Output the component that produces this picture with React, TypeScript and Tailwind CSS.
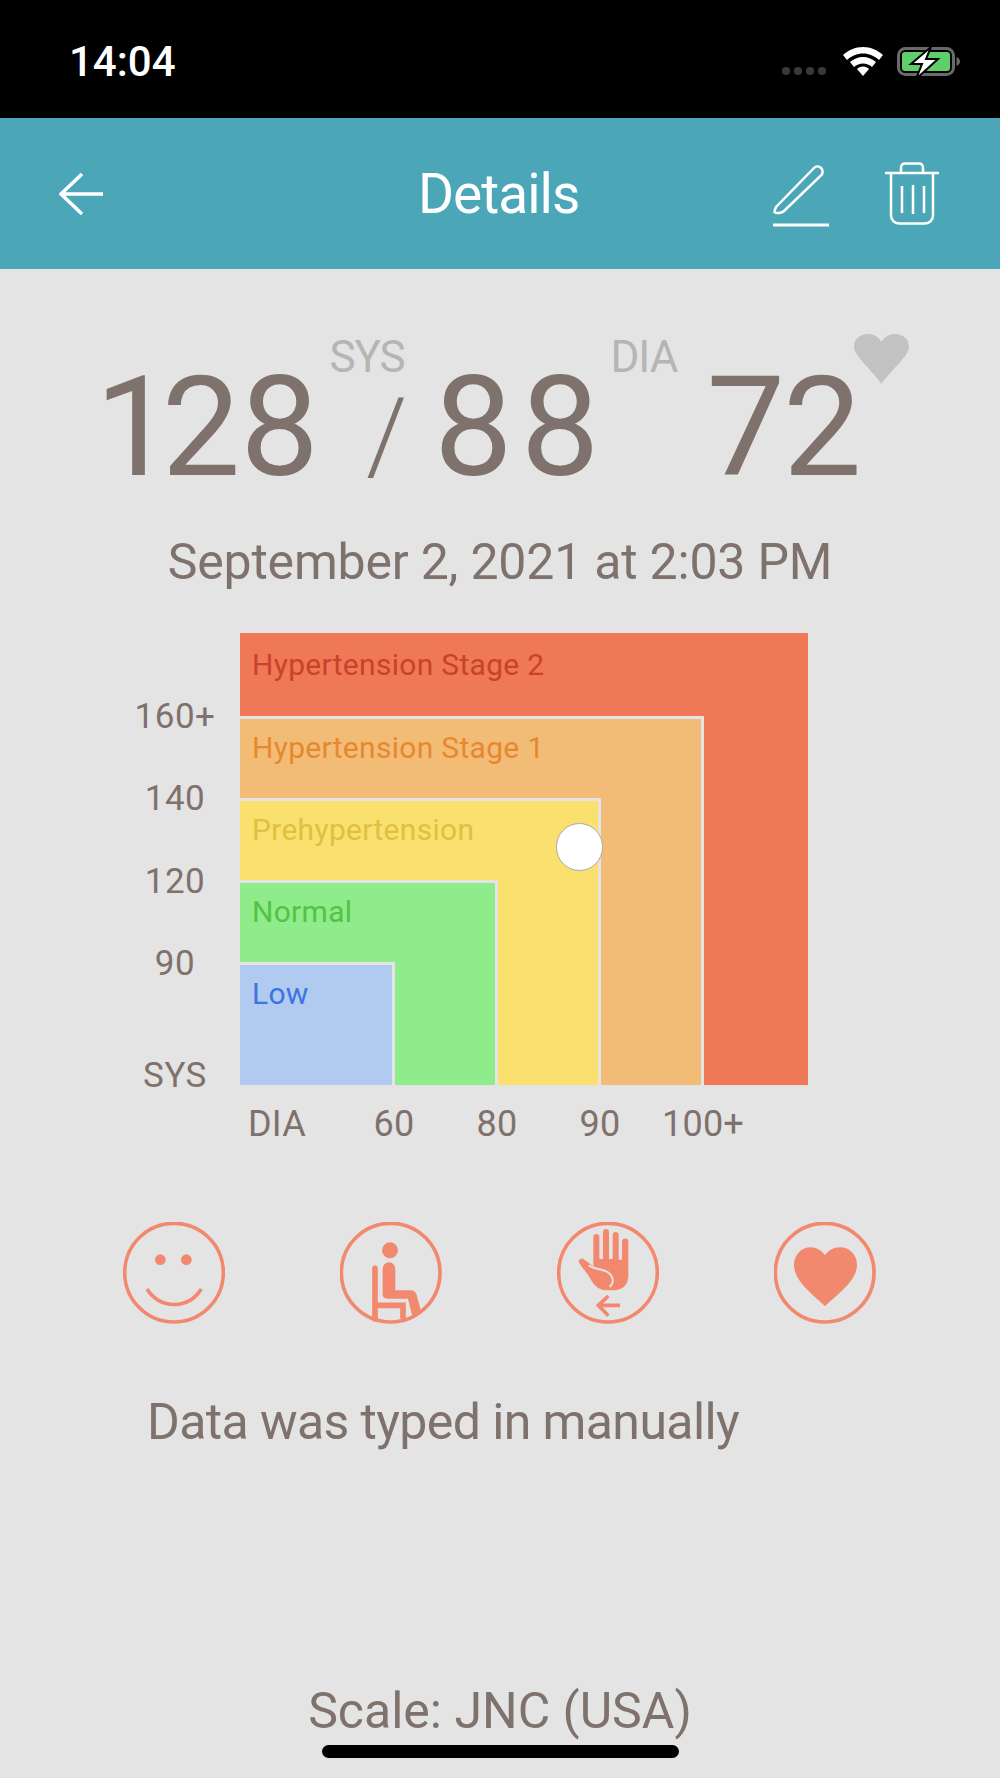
const axisY = [
  { label: "160+", className: "h-[82px]" },
  { label: "140", className: "h-[83px]" },
  { label: "120", className: "h-[82px]" },
  { label: "90", className: "h-[112px]" },
  { label: "SYS", className: "h-[40px]" },
];

const axisX = ["60", "80", "90", "100+"];

const Zone = ({
  label,
  labelColor,
  bg,
  head,
  right,
  edge,
  children,
}: {
  label: string;
  labelColor: string;
  bg: string;
  head: string;
  right: string;
  edge?: boolean;
  children?: React.ReactNode;
}) => (
  <div
    className={`flex flex-col flex-1 min-h-0 ${bg} ${right} ${
      edge ? "border-t-[3px] border-r-[3px] border-[#e4e4e4]" : ""
    }`}
  >
    <div
      className={`${head} ${
        edge ? "pt-[11px]" : "pt-[14px]"
      } shrink-0 pl-3 text-[30px] leading-[36px] tracking-[0.3px] ${labelColor}`}
    >
      {label}
    </div>
    {children}
  </div>
);

const StatusBar = () => (
  <div className="h-[118px] bg-black flex items-start pl-[69px] pr-[39px]">
    <span className="mt-[38px] text-[42px] leading-[48px] font-medium text-white">14:04</span>
    <div className="ml-auto mt-[47px] flex items-start">
      <div className="mt-[20px] flex gap-[4px]">
        <span className="w-[8px] h-[8px] rounded-full bg-[#3a3a3a]" />
        <span className="w-[8px] h-[8px] rounded-full bg-[#3a3a3a]" />
        <span className="w-[8px] h-[8px] rounded-full bg-[#3a3a3a]" />
        <span className="w-[8px] h-[8px] rounded-full bg-[#3a3a3a]" />
      </div>
      <svg className="ml-[17px]" width="40" height="29" viewBox="0 0 40 29" fill="white">
        <path d="M20 0C12 0 5.500 3 0 8l4 5c4.500-4 10-6.500 16-6.500S31.500 9 36 13l4-5C34.500 3 28 0 20 0z" />
        <path d="M20 10c-5 0-9.500 2-13 5l4 5c2.500-2 5.500-3.500 9-3.500s6.500 1.500 9 3.500l4-5c-3.500-3-8-5-13-5z" />
        <path d="M20 19.500c-2.500 0-4.500 1-6 2.500l6 7 6-7c-1.500-1.500-3.500-2.500-6-2.500z" />
      </svg>
      <svg className="ml-[14px]" width="64" height="32" viewBox="0 0 64 32">
        <rect x="1.500" y="1.500" width="55" height="26" rx="7" fill="none" stroke="#6a6a6a" strokeWidth="3" />
        <rect x="5" y="5" width="48" height="19" rx="3" fill="#5fcf6a" />
        <path d="M59.500 10c2.500 1 3.500 3 3.500 4.500S62 18 59.500 19z" fill="#6a6a6a" />
        <path d="M34 0 14 17h11l-6 15 22-20H29z" fill="white" stroke="black" strokeWidth="2" />
      </svg>
    </div>
  </div>
);

const NavBar = () => (
  <div className="h-[151px] bg-[#4ba7b8] flex items-center pl-[59px] pr-[61px] text-white">
    <svg width="44" height="42" viewBox="0 0 44 42" fill="none" stroke="white" strokeWidth="3.500">
      <path d="M44 21H3M23 1 2 21l21 20" />
    </svg>
    <span className="ml-[315px] text-[55px] leading-[60px] tracking-[-1px]">Details</span>
    <svg className="ml-auto mt-[5px]" width="56" height="63" viewBox="0 0 56 63" fill="none" stroke="white" strokeWidth="2.500">
      <path d="M1.500 47c0-2 1-4 2-5.500L41 3c2-2 5-2 7 0s2 5 .5 7L11 46c-2 2-8 3-9.500 1z" />
      <path d="M0 60h56" strokeWidth="3" />
    </svg>
    <svg className="ml-[56px]" width="54" height="63" viewBox="0 0 54 63" fill="none" stroke="white" strokeWidth="2.500">
      <path d="M0 11h54" />
      <path d="M16 10V6c0-3 2-4.500 4.500-4.500h13C36 1.500 38 3 38 6v4" />
      <path d="M6 11v42c0 5 3.500 8.500 8 8.500h26c4.500 0 8-3.500 8-8.500V11" />
      <path d="M17 24v27M28 23v29M39 24v27" />
    </svg>
  </div>
);

const Reading = () => (
  <div className="mt-[65px] ml-[95px] h-[150px] flex items-start text-[#7f716b] leading-none">
    <span className="mt-[36px] text-[140px] leading-[114px]">
      <span className="tracking-[-12px]">1</span>28
    </span>
    <div className="w-[115px] pr-[19px] h-[150px] flex flex-col items-center">
      <span className="mt-[3px] h-[40px] text-[44px] leading-[40px] tracking-[-1px] text-[#b5b5b5]">SYS</span>
      <span className="mt-[18px] ml-[39px] text-[104px] leading-[84px] font-light">/</span>
    </div>
    <span className="mt-[36px] text-[140px] leading-[114px] tracking-[8px]">88</span>
    <div className="w-[99px] pr-[26px] h-[150px] flex flex-col items-center">
      <span className="mt-[3px] h-[40px] text-[44px] leading-[40px] tracking-[-1px] text-[#b5b5b5]">DIA</span>
    </div>
    <span className="mt-[36px] text-[140px] leading-[114px] tracking-[-2px]">72</span>
    <svg className="-ml-[6px]" width="55" height="50" viewBox="0 0 55 50" fill="#c2c2c2">
      <path d="M27.500 50C20 38 0 22 0 13 0 5 6 0 14 0c6 0 11 3 13.500 8C30 3 35 0 41 0c8 0 14 5 14 13 0 9-20 25-27.500 37z" />
    </svg>
  </div>
);

const Chart = () => (
  <div className="mt-[41px] flex items-start text-[#7f716b]">
    <div className="w-[110px] ml-[120px] mt-[64px] flex flex-col items-center text-[35px] leading-[40px] tracking-[0.5px] shrink-0">
      {axisY.map((a) => (
        <div key={a.label} className={a.className}>
          {a.label}
        </div>
      ))}
    </div>
    <div className="ml-[10px] relative w-[568px] h-[452px] flex flex-col">
      <Zone label="Hypertension Stage 2" labelColor="text-[#c9432a]" bg="bg-[#ef7857]" head="h-[83px]" right="">
        <Zone label="Hypertension Stage 1" labelColor="text-[#e5892f]" bg="bg-[#f3bc76]" head="h-[79px]" right="mr-[104px]" edge>
          <Zone label="Prehypertension" labelColor="text-[#e1bf3f]" bg="bg-[#f9e06f]" head="h-[79px]" right="mr-[100px]" edge>
            <Zone label="Normal" labelColor="text-[#55c247]" bg="bg-[#8eec8b]" head="h-[79px]" right="mr-[100px]" edge>
              <Zone label="Low" labelColor="text-[#3c74e0]" bg="bg-[#b0caf0]" head="h-[100%]" right="mr-[100px]" edge />
            </Zone>
          </Zone>
        </Zone>
      </Zone>
      <div className="absolute left-[316px] top-[190px] w-[47px] h-[48px] rounded-full bg-white border border-[#a9a9a9]" />
    </div>
  </div>
);

const AxisX = () => (
  <div className="mt-[8px] flex pl-[248px] text-[#7f716b] text-[36px] leading-[40px] tracking-[0.2px]">
    <div className="w-[94.500px]">DIA</div>
    {axisX.map((t) => (
      <div key={t} className="w-[103px] text-center">
        {t}
      </div>
    ))}
  </div>
);

const Tags = () => (
  <div className="mt-[78px] flex pl-[123px] gap-[115px]">
    <svg width="102" height="102" viewBox="70 67 306 306">
      <circle cx="223" cy="219" r="148" fill="none" stroke="#f2896f" strokeWidth="11" />
      <circle cx="182" cy="180" r="16" fill="#f2896f" />
      <circle cx="260" cy="180" r="16" fill="#f2896f" />
      <path d="M142 268c40 62 123 62 163 0" fill="none" stroke="#f2896f" strokeWidth="11" />
    </svg>
    <svg width="102" height="102" viewBox="718 67 306 306">
      <circle cx="870" cy="219" r="148" fill="none" stroke="#f2896f" strokeWidth="11" />
      <circle cx="868" cy="152" r="24" fill="#f2896f" />
      <path
        d="M846 207a19 19 0 0 1 38 0V272H930q14 0 18 14L962 338 935 350 922 297H860q-14 0-14-14Z"
        fill="#f2896f"
      />
      <path d="M823 206V358M823 317H907V352" fill="none" stroke="#f2896f" strokeWidth="17" strokeLinecap="round" />
    </svg>
    <svg width="102" height="102" viewBox="110 67 306 306">
      <circle cx="263" cy="219" r="148" fill="none" stroke="#f2896f" strokeWidth="11" />
      <path
        d="M219 112a9 9 0 0 1 18 0V178H248V97a9 9 0 0 1 18 0V178H277V106a9 9 0 0 1 18 0V180H305V126a9 9 0 0 1 19 0V225q0 47-50 47H262q-35 0-52-35-8-14-20-28L178 192a9 9 0 0 1 14-12L219 200Z"
        fill="#f2896f"
      />
      <path d="M205 197C235 215 270 205 277 240 280 252 272 258 268 262" fill="none" stroke="#e4e4e4" strokeWidth="6" />
      <path d="M299 317H236M264 289 234 317 264 348" fill="none" stroke="#f2896f" strokeWidth="11" />
    </svg>
    <svg width="102" height="102" viewBox="762 67 306 306">
      <circle cx="914" cy="219" r="148" fill="none" stroke="#f2896f" strokeWidth="11" />
      <path
        d="M915 320C880 285 822 245 822 195 822 165 845 143 872 143 890 143 905 152 915 167 925 152 940 143 960 143 988 143 1011 165 1011 195 1011 245 950 285 915 320Z"
        fill="#f2896f"
      />
    </svg>
  </div>
);

export default function App() {
  return (
    <div className="relative w-[1000px] h-[1778px] overflow-hidden bg-[#e4e4e4] font-['Roboto',sans-serif]">
      <StatusBar />
      <NavBar />
      <Reading />
      <div className="mt-[48px] text-center text-[50px] leading-[60px] tracking-[-0.2px] text-[#7f716b]">
        September 2, 2021 at 2:03 PM
      </div>
      <Chart />
      <AxisX />
      <Tags />
      <div className="mt-[68px] pl-[147px] text-[50px] leading-[60px] tracking-[-0.6px] text-[#7f716b]">
        Data was typed in manually
      </div>
      <div className="mt-[229px] text-center text-[50px] leading-[60px] tracking-[0px] text-[#7f716b]">
        Scale: JNC (USA)
      </div>
      <div className="absolute left-[322px] top-[1745px] w-[357px] h-[13px] rounded-full bg-black" />
    </div>
  );
}
